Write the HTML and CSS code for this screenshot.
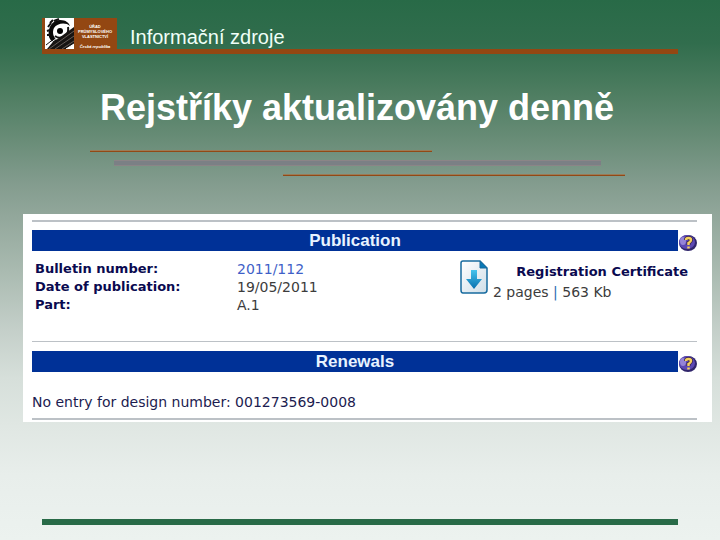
FILE: index.html
```html
<!DOCTYPE html>
<html lang="cs">
    <head>
        <meta charset="utf-8">
        <title>Rejstříky aktualizovány denně</title>
        <link rel="stylesheet" href="styles.css">
    </head>
    <body>
        <div class="slide">
            <header class="top">
                <div class="logo">
                    <svg class="seal" viewBox="0 0 29 31" aria-hidden="true">
                        <rect width="29" height="31" fill="#fff"/>
                        <path d="M4 19C2 9 8 2 15 2C21 2 24 5 25 8C21 4 12 5 9 10C7 14 8 19 12 22L8 25C6 23 5 21 4 19Z" fill="#090909"/>
                        <path d="M10 18Q15 22 21 17Q24 14 23 9" fill="none" stroke="#111" stroke-width="2"/>
                        <circle cx="15" cy="13" r="3" fill="#000"/>
                        <path d="M3 9L6 5M5 5L8 2M9 3L14 1M2 13l3-1M2 17h3" stroke="#111" stroke-width="2"/>
                        <path d="M2 31L7 25L29 9V31Z" fill="#171412"/>
                        <path d="M4 31L29 13M10 31L29 18M17 31L29 23" stroke="#655d58" stroke-width="1"/>
                        <path d="M0 29L12 20M21 31L29 26V31Z" fill="#fff" stroke="#fff" stroke-width="1"/>
                        <path d="M1 27L10 20" stroke="#111" stroke-width="1"/>
                    </svg>
                    <div class="office">
                        <span>ÚŘAD<br>PRŮMYSLOVÉHO<br>VLASTNICTVÍ</span>
                        <em>Česká republika</em>
                    </div>
                </div>
                <p class="topic">Informační zdroje</p>
            </header>

            <h1>Rejstříky aktualizovány denně</h1>
            <div class="rules">
                <div class="rule left"></div>
                <div class="rule middle"></div>
                <div class="rule right"></div>
            </div>

            <main class="panel">
                <section class="block publication">
                    <div class="bar">
                        <h2>Publication</h2>
                        <button class="help" type="button" aria-label="Help">
                            <svg viewBox="0 0 18 16">
                                <ellipse cx="9" cy="8" rx="9" ry="8" fill="#30256b"/>
                                <ellipse cx="8" cy="7" rx="8" ry="7" fill="#5c48b4"/>
                                <ellipse cx="4" cy="6" rx="3" ry="4" fill="#9583d6"/>
                                <path d="M7 5Q7 3 9.500 3Q12 3 12 5Q12 6.500 9.500 8V10" fill="none" stroke="#34204b" stroke-width="4"/>
                                <path d="M7 5Q7 3 9.500 3Q12 3 12 5Q12 6.500 9.500 8V10M9.500 11.500V13.500" fill="none" stroke="#f5d05d" stroke-width="2.500"/>
                            </svg>
                        </button>
                    </div>
                    <div class="details">
                        <table>
                            <tr><th scope="row">Bulletin number:</th><td><a href="#">2011/112</a></td></tr>
                            <tr><th scope="row">Date of publication:</th><td>19/05/2011</td></tr>
                            <tr><th scope="row">Part:</th><td>A.1</td></tr>
                        </table>
                        <div class="certificate">
                            <svg class="download" viewBox="0 0 28 34" aria-hidden="true">
                                <defs>
                                    <linearGradient id="sheet" x2="1" y2="1">
                                        <stop offset="0" stop-color="#fff"/>
                                        <stop offset="1" stop-color="#cfdee8"/>
                                    </linearGradient>
                                    <linearGradient id="arrow" x2="0" y2="1">
                                        <stop offset="0" stop-color="#45c4ed"/>
                                        <stop offset="1" stop-color="#086fae"/>
                                    </linearGradient>
                                </defs>
                                <path d="M3 1H20L27 8V30Q27 33 24 33H3Q1 33 1 30V3Q1 1 3 1Z" fill="url(#sheet)" stroke="#176b9f" stroke-width="1.500"/>
                                <path d="M20 1V8H27Z" fill="#0879b6" stroke="#176b9f"/>
                                <path d="M11 10H17V19H22L14 29L6 19H11Z" fill="url(#arrow)"/>
                            </svg>
                            <div class="file">
                                <strong>Registration Certificate</strong>
                                <span>2 pages <i>|</i> 563 Kb</span>
                            </div>
                        </div>
                    </div>
                </section>

                <section class="block renewals">
                    <div class="bar">
                        <h2>Renewals</h2>
                        <button class="help" type="button" aria-label="Help">
                            <svg viewBox="0 0 18 16">
                                <ellipse cx="9" cy="8" rx="9" ry="8" fill="#30256b"/>
                                <ellipse cx="8" cy="7" rx="8" ry="7" fill="#5c48b4"/>
                                <ellipse cx="4" cy="6" rx="3" ry="4" fill="#9583d6"/>
                                <path d="M7 5Q7 3 9.500 3Q12 3 12 5Q12 6.500 9.500 8V10" fill="none" stroke="#34204b" stroke-width="4"/>
                                <path d="M7 5Q7 3 9.500 3Q12 3 12 5Q12 6.500 9.500 8V10M9.500 11.500V13.500" fill="none" stroke="#f5d05d" stroke-width="2.500"/>
                            </svg>
                        </button>
                    </div>
                    <p class="entry">No entry for design number: <span>001273569-0008</span></p>
                </section>
            </main>

            <footer class="bottom"></footer>
        </div>
    </body>
</html>
```

FILE: styles.css
```css
* {
    box-sizing: border-box;
}
body {
    margin: 0;
    font-family: "Liberation Sans", Arial, sans-serif;
}
h1, h2, p {
    margin: 0;
}
.slide {
    display: flex;
    flex-direction: column;
    min-height: 100vh;
    padding: 18px 0 15px;
    background: linear-gradient(#286a47 0%, #316d4d 8%, #4a7b5e 16%, #668b75 25%, #839c8e 34%, #92a79b 40%, #a9bab0 50%, #c4cfc9 61%, #d6dfda 70%, #e0e7e3 79%, #e8eeeb 88%, #ecf2ef 100%);
}

/* header with office logo */
.top {
    display: flex;
    margin: 0 42px;
    border-bottom: 5px solid #934712;
}
.logo {
    display: flex;
    width: 75px;
    height: 31px;
    padding: 0 1px 0 3px;
    background: #934712;
}
.seal {
    flex: none;
    width: 29px;
    height: 31px;
}
.office {
    display: flex;
    flex: 1;
    flex-direction: column;
    align-items: center;
    justify-content: space-between;
    padding-top: 6px;
    color: #fff;
    font-size: 4px;
    font-weight: bold;
    line-height: 5px;
    text-align: center;
    white-space: nowrap;
}
.topic {
    padding: 8px 0 0 13px;
    color: #f0fff8;
    font-size: 20px;
    line-height: 23px;
}

h1 {
    margin-top: 34px;
    padding: 0 40px 0 34px;
    color: #fff;
    font-size: 36px;
    line-height: 40px;
    text-align: center;
}
.rules {
    display: flex;
    flex-direction: column;
    gap: 8px;
    margin: 22px 95px 0 90px;
}
.rule {
    height: 2px;
    border-top: 1px solid #9b7b55;
    background: #914916;
}
.left {
    width: 64%;
}
.middle {
    width: 91%;
    height: 6px;
    margin-left: 24px;
    border-top: 1px solid #8b8587;
    border-bottom: 1px solid #8b8587;
    background: #7b8085;
}
.right {
    width: 64%;
    align-self: flex-end;
}

.panel {
    margin: 38px 8px 0 23px;
    padding: 6px 15px 2px 9px;
    background: #fff;
    color: #3c3c3c;
    font-family: "DejaVu Sans", Verdana, sans-serif;
    font-size: 14px;
    line-height: 18px;
}
.block {
    border-top: 2px solid #bcc1c6;
}
.publication {
    min-height: 121px;
}
.renewals {
    border-top-width: 1px;
    border-bottom: 2px solid #bcc1c6;
}
.bar {
    display: flex;
    align-items: flex-end;
    gap: 1px;
    padding-top: 8px;
}
.renewals .bar {
    padding-top: 9px;
}
.bar h2 {
    flex: 1;
    background: #003197;
    color: #e8f3ff;
    font-family: "Liberation Sans", Arial, sans-serif;
    font-size: 17px;
    line-height: 21px;
    text-align: center;
}
.help {
    width: 18px;
    height: 16px;
    padding: 0;
    border: 0;
    background: none;
}
.help svg {
    display: block;
    width: 18px;
    height: 16px;
}
.details {
    display: flex;
    justify-content: space-between;
    padding: 9px 9px 0 3px;
}
table {
    border-collapse: collapse;
}
th, td {
    padding: 0;
    white-space: nowrap;
}
th {
    min-width: 202px;
    color: #0a0a50;
    font-size: 13px;
    text-align: left;
}
td a {
    color: #3f5fc8;
    text-decoration: none;
}
.certificate {
    display: flex;
    align-items: flex-start;
    gap: 5px;
    width: 228px;
}
.download {
    flex: none;
    width: 28px;
    height: 34px;
}
.file {
    display: flex;
    flex: 1;
    flex-direction: column;
    gap: 2px;
    padding-top: 3px;
    white-space: nowrap;
}
.file strong {
    align-self: flex-end;
    color: #0a0a50;
    font-size: 13px;
}
.file i {
    color: #2b6cb0;
    font-style: normal;
}
.entry {
    padding: 21px 0 7px;
    color: #1c1c50;
}

.bottom {
    height: 6px;
    margin: auto 42px 0;
    background: #286a47;
}
```
